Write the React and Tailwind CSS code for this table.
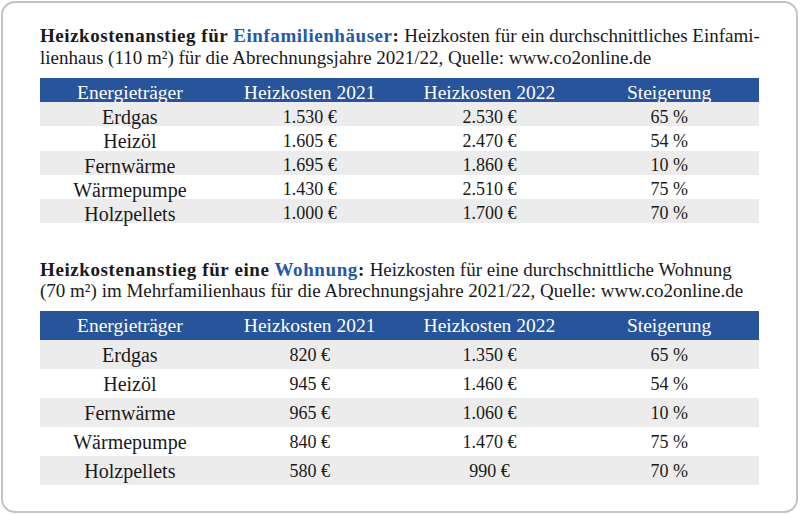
import React from 'react';

const haus = [
  ['Erdgas', '1.530 €', '2.530 €', '65 %'],
  ['Heizöl', '1.605 €', '2.470 €', '54 %'],
  ['Fernwärme', '1.695 €', '1.860 €', '10 %'],
  ['Wärmepumpe', '1.430 €', '2.510 €', '75 %'],
  ['Holzpellets', '1.000 €', '1.700 €', '70 %'],
];

const wohnung = [
  ['Erdgas', '820 €', '1.350 €', '65 %'],
  ['Heizöl', '945 €', '1.460 €', '54 %'],
  ['Fernwärme', '965 €', '1.060 €', '10 %'],
  ['Wärmepumpe', '840 €', '1.470 €', '75 %'],
  ['Holzpellets', '580 €', '990 €', '70 %'],
];

const head = ['Energieträger', 'Heizkosten 2021', 'Heizkosten 2022', 'Steigerung'];

function Table({ rows, rowH }) {
  return (
    <div className="w-[719px]">
      <div className={`grid grid-cols-4 bg-[#27549b] text-white text-[19.5px] ${rowH}`}>
        {head.map((h) => (
          <div key={h} className="flex items-center justify-center">{h}</div>
        ))}
      </div>
      {rows.map((r, i) => (
        <div key={r[0]} className={`grid grid-cols-4 ${rowH} ${i % 2 === 0 ? 'bg-[#ececec]' : 'bg-white'}`}>
          {r.map((c, j) => (
            <div key={j} className={`flex items-center justify-center ${j === 0 ? 'text-[20px]' : 'text-[18px]'}`}>{c}</div>
          ))}
        </div>
      ))}
    </div>
  );
}

export default function App() {
  return (
    <div className="w-[800px] h-[515px] bg-white pt-px pl-px font-['Liberation_Serif',serif] text-[#1a1a1a]">
      <div className="w-[797px] h-[512px] border-2 border-[#c4c4c4] rounded-[14px] pl-[37px] pt-[22px]">
        <p className="leading-[22px] text-[19px] whitespace-nowrap">
          <b className="tracking-[0.55px]">Heizkostenanstieg für <span className="text-[#2558a5]">Einfamilienhäuser</span>:</b> Heizkosten für ein durchschnittliches Einfami-
          <br />
          lienhaus (110 m²) für die Abrechnungsjahre 2021/22, Quelle: www.co2online.de
        </p>
        <div className="mt-[9px]">
          <Table rows={haus} rowH="h-[24.2px]" />
        </div>
        <p className="leading-[21px] text-[19px] mt-[36px] whitespace-nowrap">
          <b className="tracking-[0.6px]">Heizkostenanstieg für eine <span className="text-[#2558a5]">Wohnung</span>:</b> Heizkosten für eine durchschnittliche Wohnung
          <br />
          (70 m²) im Mehrfamilienhaus für die Abrechnungsjahre 2021/22, Quelle: www.co2online.de
        </p>
        <div className="mt-[10px]">
          <Table rows={wohnung} rowH="h-[29px]" />
        </div>
      </div>
    </div>
  );
}
